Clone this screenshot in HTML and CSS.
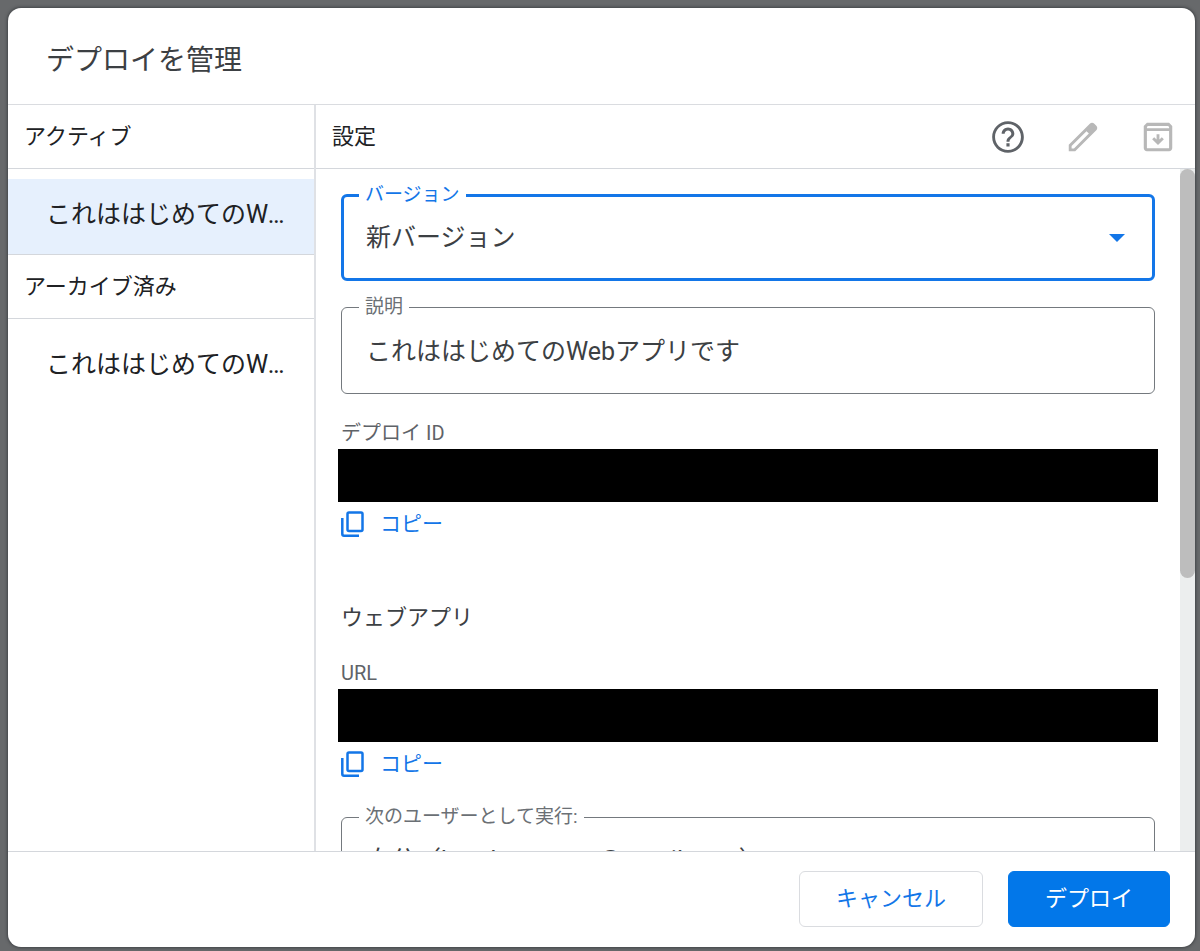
FILE: index.html
```html
<!DOCTYPE html>
<html lang="ja">
<head>
<meta charset="utf-8">
<title>デプロイを管理</title>
<link rel="stylesheet" href="styles.css">
</head>
<body>
<main class="dialog" role="dialog" aria-labelledby="dialog-title">
  <header class="dialog-header"><h1 class="dialog-title" id="dialog-title">デプロイを管理</h1></header>
  <div class="dialog-body">
    <nav class="sidebar">
      <h2 class="bar">アクティブ</h2>
      <div class="group"><button class="item item-selected" type="button"><span class="item-text">これははじめてのWebアプリです</span></button></div>
      <h2 class="bar bar-lower">アーカイブ済み</h2>
      <div class="group"><button class="item" type="button"><span class="item-text">これははじめてのWebアプリです</span></button></div>
    </nav>
    <section class="settings">
      <div class="bar settings-bar">
        <h2 class="settings-title">設定</h2>
        <div class="actions">
          <button class="icon-button" type="button" aria-label="ヘルプ">
            <svg class="icon-large" viewBox="0 0 24 24"><path d="M11 18h2v-2h-2v2zm1-16C6.480 2 2 6.480 2 12s4.480 10 10 10 10-4.480 10-10S17.520 2 12 2zm0 18.200c-4.520 0-8.200-3.680-8.200-8.200S7.480 3.800 12 3.800s8.200 3.680 8.200 8.200-3.680 8.200-8.200 8.200zM12 6c-2.210 0-4 1.790-4 4h1.900c0-1.100.95-2.100 2.100-2.100s2.100 1 2.100 2.100c0 2-3.050 1.850-3.050 5h1.900c0-2.250 3.050-2.500 3.050-5 0-2.210-1.790-4-4-4z"/></svg>
          </button>
          <button class="icon-button" type="button" aria-label="編集" disabled>
            <svg class="icon-large" viewBox="0 0 24 24"><path d="M20.400 4.850 19.150 3.600c-.8-.8-2.050-.8-2.850 0L3 16.900V21h4.100L20.400 7.700c.8-.8.8-2.050 0-2.850zM6.300 19.200H4.800v-1.500L14.200 8.300l1.500 1.500-9.400 9.400z"/></svg>
          </button>
          <button class="icon-button" type="button" aria-label="アーカイブ" disabled>
            <svg class="icon-large" viewBox="0 0 24 24"><path fill-rule="evenodd" d="M5 3h14l2 2v14c0 1.100-.9 2-2 2H5c-1.100 0-2-.9-2-2V5zM5 8.200v10.900h14V8.200zM5.500 5l-.5.900v.500h14v-.500l-.5-.9zM11.100 10.300h1.800v3.300l1.500-1.500 1.300 1.300L12 17l-3.700-3.600 1.300-1.300 1.500 1.500z"/></svg>
          </button>
        </div>
      </div>
      <div class="viewport">
        <form class="form" id="deploy-form">
          <fieldset class="field field-focused">
            <legend class="legend"><label for="version">バージョン</label></legend>
            <div class="select-row">
              <select class="control" id="version"><option>新バージョン</option></select>
              <svg class="caret" viewBox="0 0 16 8"><path d="M0 0h16L8 8z"/></svg>
            </div>
          </fieldset>
          <fieldset class="field">
            <legend class="legend"><label for="description">説明</label></legend>
            <input class="control" id="description" type="text" value="これははじめてのWebアプリです">
          </fieldset>
          <div class="entry">
            <span class="caption">デプロイ ID</span>
            <div class="redacted"></div>
            <button class="copy" type="button">
              <svg class="icon-copy" viewBox="0 0 24 26"><rect x="6.500" y="1.500" width="15" height="18.500" rx="1.500"/><path d="M1.300 7v16a1.700 1.700 0 0 0 1.700 1.700H18"/></svg>
              <span>コピー</span>
            </button>
          </div>
          <h3 class="section-title">ウェブアプリ</h3>
          <div class="entry">
            <span class="caption">URL</span>
            <div class="redacted"></div>
            <button class="copy" type="button">
              <svg class="icon-copy" viewBox="0 0 24 26"><rect x="6.500" y="1.500" width="15" height="18.500" rx="1.500"/><path d="M1.300 7v16a1.700 1.700 0 0 0 1.700 1.700H18"/></svg>
              <span>コピー</span>
            </button>
          </div>
          <fieldset class="field field-last">
            <legend class="legend"><label for="run-as">次のユーザーとして実行:</label></legend>
            <div class="select-row">
              <select class="control" id="run-as"><option>自分（haruka.azuma@gmail.com）</option></select>
            </div>
          </fieldset>
        </form>
        <div class="track"><div class="thumb"></div></div>
      </div>
    </section>
  </div>
  <footer class="dialog-footer">
    <button class="button" type="button">キャンセル</button>
    <button class="button button-primary" type="submit" form="deploy-form">デプロイ</button>
  </footer>
</main>
</body>
</html>
```
FILE: styles.css
```css
* { box-sizing: border-box; }

body {
  display: flex;
  height: 100vh;
  margin: 0;
  padding: 8px 5px 4px 8px;
  background: #67696b;
  color: #3c4043;
  font-family: Roboto, "Noto Sans CJK JP", sans-serif;
  font-size: 22px;
  line-height: 32px;
}

button, input, select { font: inherit; color: inherit; }
button { padding: 0; border: 0; background: none; cursor: pointer; }
h1, h2, h3 { margin: 0; font-weight: 400; }

.dialog {
  display: flex;
  flex: 1;
  flex-direction: column;
  min-width: 0;
  overflow: hidden;
  border-radius: 13px;
  background: #fff;
  box-shadow: 0 0 3px 1px #424548;
}

.dialog-header {
  padding: 37px 38px 27px;
  border-bottom: 1px solid #dadce0;
}
.dialog-title { font-size: 28px; line-height: 32px; }

.dialog-body { display: flex; flex: 1; min-height: 0; }

.sidebar {
  flex: none;
  width: 308px;
  border-right: 2px solid #dfe1e5;
  color: #202124;
}
.bar {
  height: 64px;
  padding: 16px 16px 15px;
  border-bottom: 1px solid #d4d7dc;
  font-size: 22px;
  line-height: 32px;
}
.bar-lower { border-top: 1px solid #d4d7dc; height: 65px; }
.group { padding-top: 10px; }
.item {
  display: block;
  width: 100%;
  height: 75px;
  padding: 0 28px 3px 38px;
  text-align: left;
  font-size: 25px;
}
.item-selected { background: #e6f0fd; }
.item-text {
  display: block;
  overflow: hidden;
  text-overflow: ellipsis;
  white-space: nowrap;
}

.settings { display: flex; flex: 1; flex-direction: column; min-width: 0; }
.settings-bar {
  display: flex;
  align-items: center;
  justify-content: space-between;
  padding: 0 18px 0 16px;
  color: #202124;
}
.settings-title { font-size: 22px; }
.actions { display: flex; gap: 37px; }
.icon-button { display: flex; color: #5f6368; }
.icon-button:disabled { color: #b8b8b8; }
.icon-large { width: 38px; height: 38px; fill: currentColor; }

.viewport { display: flex; flex: 1; min-height: 0; overflow: hidden; }
.form {
  flex: 1;
  min-width: 0;
  padding: 16px 25px 0;
}
.field {
  height: 97px;
  min-width: 0;
  margin: 0 0 16px;
  padding: 0 24px 0 17px;
  border: 1px solid #74797e;
  border-radius: 6px;
}
.field-focused {
  height: 96px;
  border: 3px solid #1376e8;
  padding: 0 27px 0 15px;
}
.legend {
  padding: 0 6px;
  color: #6b7075;
  font-size: 19px;
  line-height: 20px;
}
.field-focused .legend { color: #1376e8; }
.control {
  display: block;
  width: 100%;
  height: 48px;
  margin-top: 8px;
  padding: 0 7px;
  border: 0;
  outline: 0;
  appearance: none;
  background: none;
  font-size: 25px;
}
.select-row {
  display: flex;
  align-items: center;
  padding-top: 9px;
}
.select-row .control { margin-top: 0; }
.field-last .select-row { padding-top: 10px; }
.caret { flex: none; width: 16px; height: 8px; fill: #1376e8; }

.caption {
  display: block;
  color: #5f6368;
  font-size: 20px;
  line-height: 32px;
}
.redacted { height: 53px; margin: 0 -3px; background: #000; }
.entry { padding-top: 7px; }
.copy {
  display: flex;
  align-items: center;
  gap: 15px;
  height: 44px;
  color: #1376e8;
  font-size: 21px;
}
.icon-copy {
  width: 24px;
  height: 26px;
  fill: none;
  stroke: currentColor;
  stroke-width: 2.5;
}
.section-title { margin-top: 56px; font-size: 22px; }
.section-title + .entry { margin-top: 16px; }
.field-last { margin-top: 21px; }

.track { flex: none; width: 15px; background: #eceeee; }
.thumb { height: 60%; border-radius: 8px; background: #bdbdbd; }

.dialog-footer {
  display: flex;
  justify-content: flex-end;
  gap: 25px;
  padding: 19px 25px 20px;
  border-top: 1px solid #d4d7dc;
}
.button {
  height: 56px;
  padding: 0 36px;
  border: 1px solid #dadce0;
  border-radius: 6px;
  color: #1376e8;
}
.button-primary {
  border-color: #0277e9;
  background: #0277e9;
  color: #fff;
}
```
